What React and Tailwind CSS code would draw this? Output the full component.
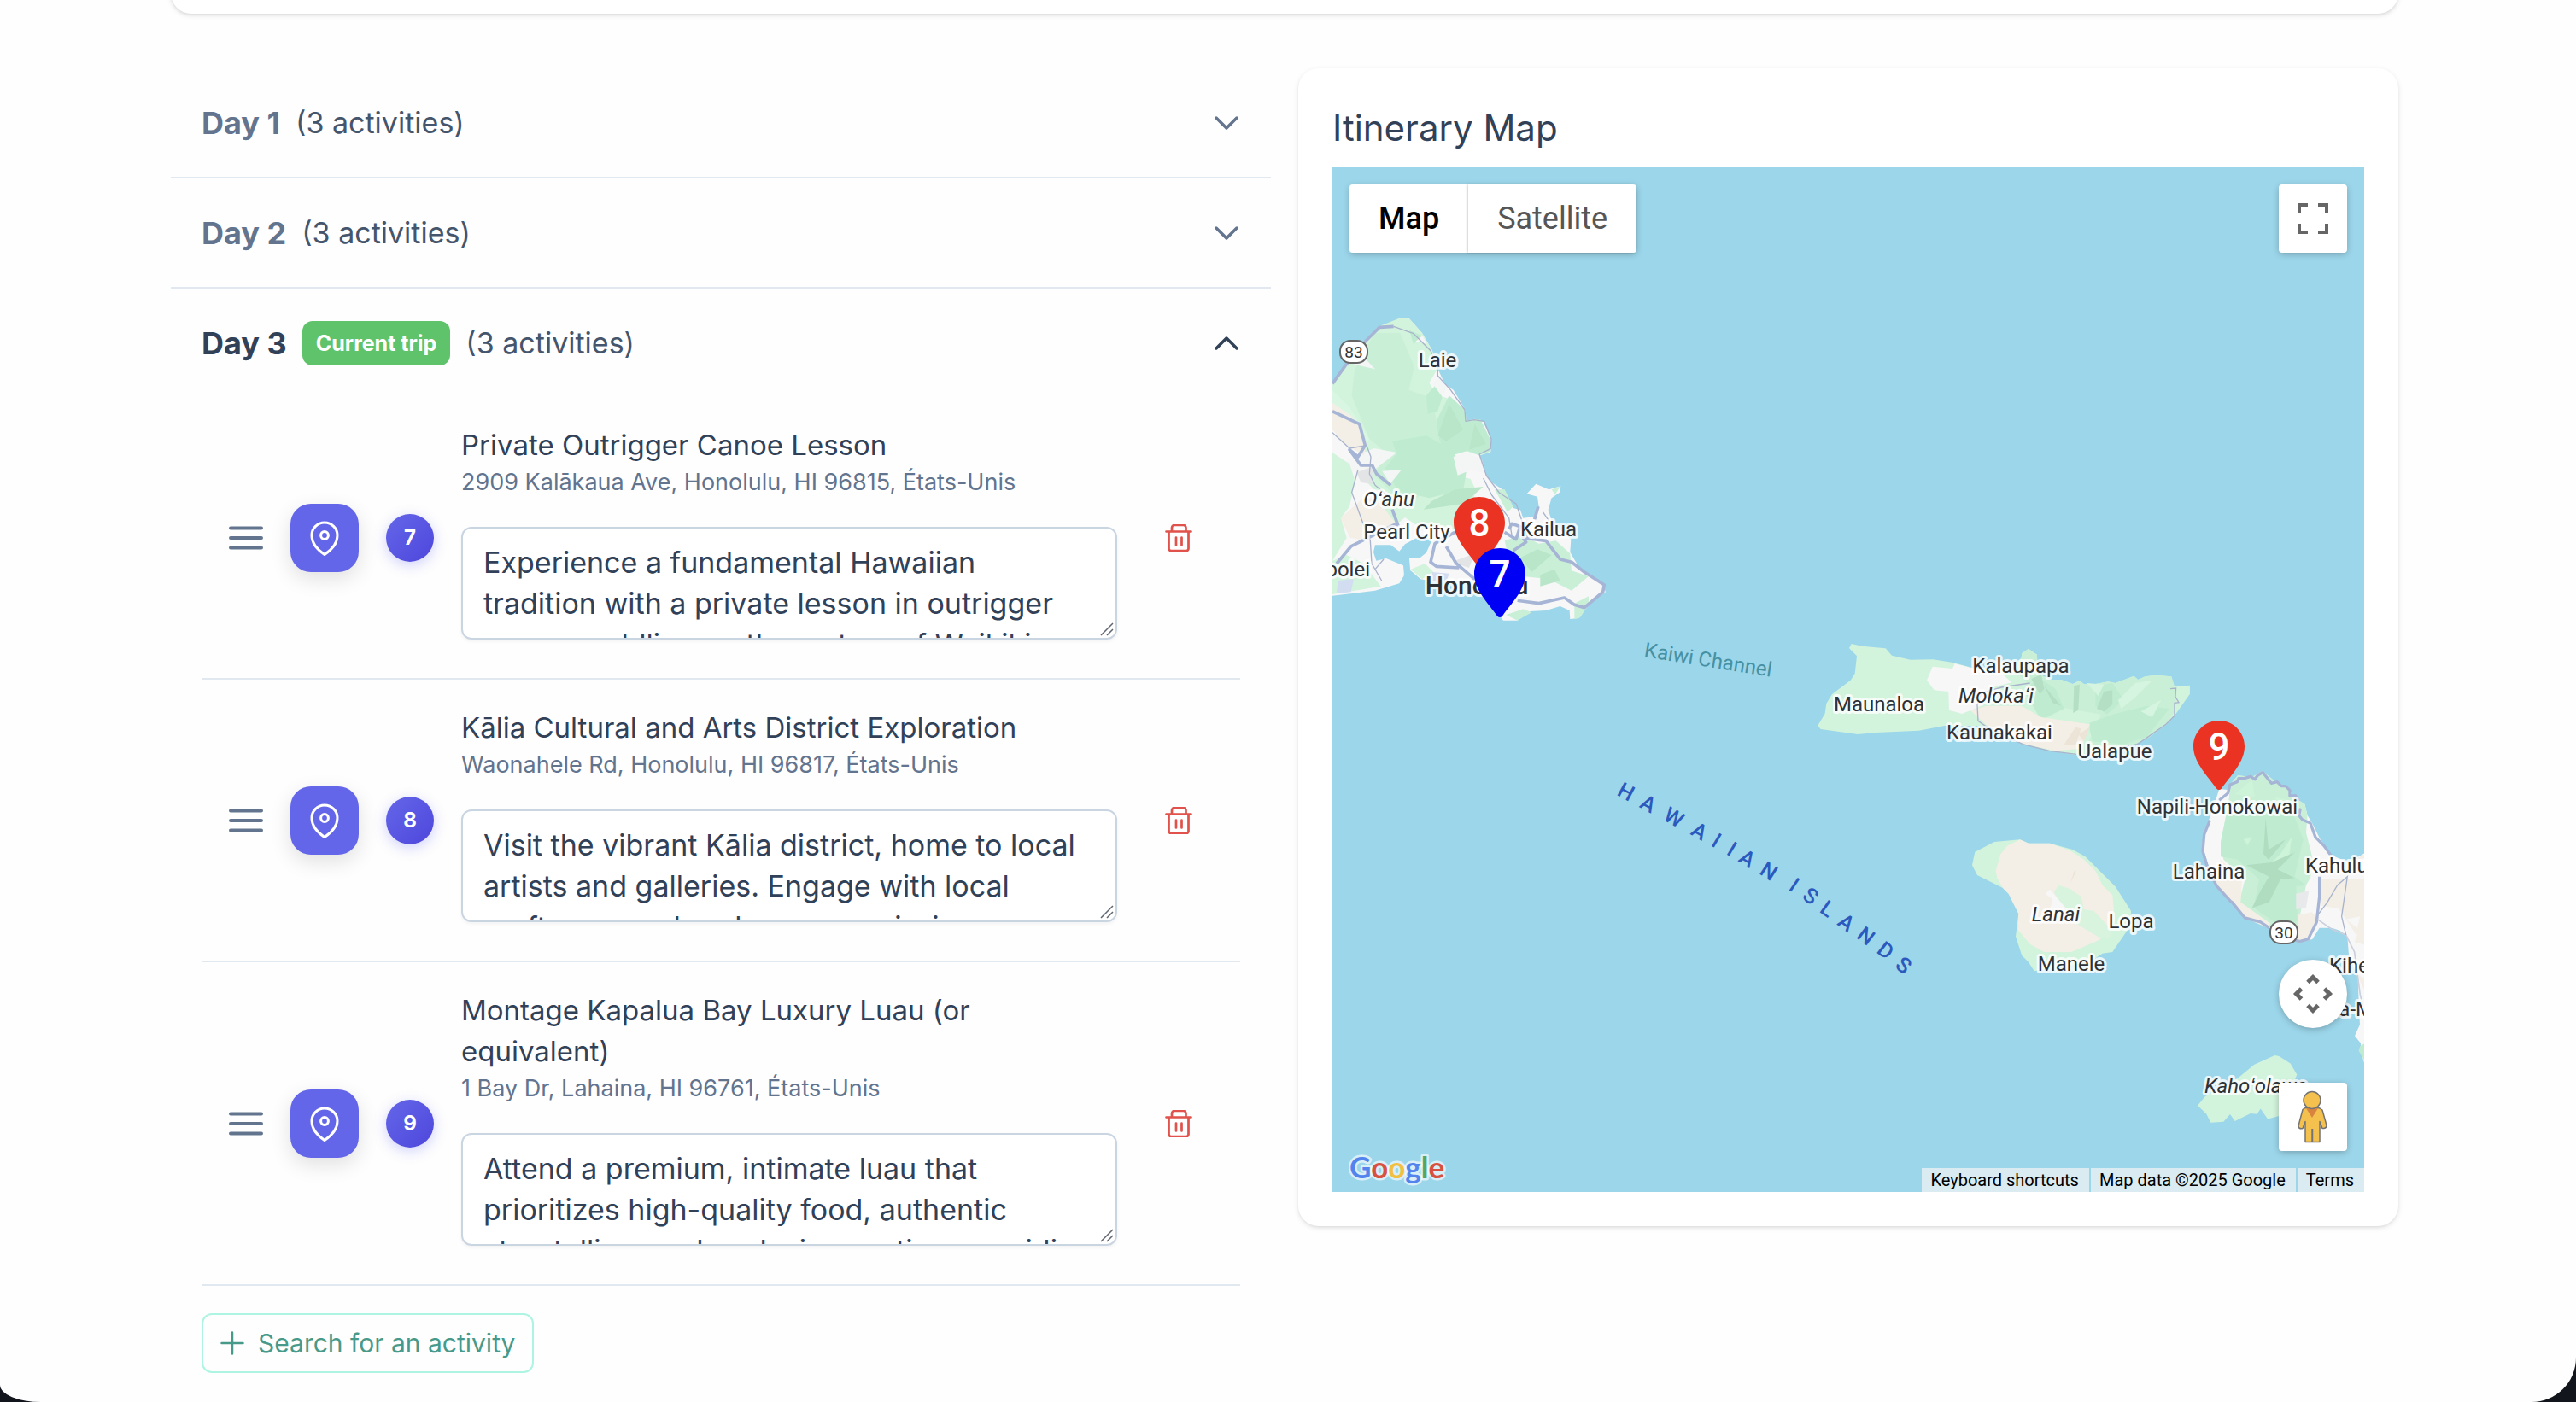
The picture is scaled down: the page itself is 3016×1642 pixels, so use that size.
import React, { useState } from "react";

const days = [
  { id: 1, current: false, activities: [] },
  { id: 2, current: false, activities: [] },
  {
    id: 3,
    current: true,
    activities: [
      {
        number: 7,
        title: "Private Outrigger Canoe Lesson",
        address: "2909 Kalākaua Ave, Honolulu, HI 96815, États-Unis",
        description:
          "Experience a fundamental Hawaiian tradition with a private lesson in outrigger canoe paddling on the waters of Waikiki.",
      },
      {
        number: 8,
        title: "Kālia Cultural and Arts District Exploration",
        address: "Waonahele Rd, Honolulu, HI 96817, États-Unis",
        description:
          "Visit the vibrant Kālia district, home to local artists and galleries. Engage with local craftsmen and perhaps commission a unique piece.",
      },
      {
        number: 9,
        title: "Montage Kapalua Bay Luxury Luau (or equivalent)",
        address: "1 Bay Dr, Lahaina, HI 96761, États-Unis",
        description:
          "Attend a premium, intimate luau that prioritizes high-quality food, authentic storytelling, and exclusive seating, providing a refined evening.",
      },
    ],
  },
];

const labels = [
  { text: "Laie", x: 123, y: 234 },
  { text: "Oʻahu", x: 66, y: 397, italic: true },
  { text: "Pearl City", x: 87, y: 435 },
  { text: "Kailua", x: 253, y: 432 },
  { text: "Kapolei", x: 44, y: 479, anchor: "end" },
  { text: "Kalaupapa", x: 806, y: 592 },
  { text: "Molokaʻi", x: 777, y: 627, italic: true },
  { text: "Maunaloa", x: 640, y: 637 },
  { text: "Kaunakakai", x: 781, y: 670 },
  { text: "Ualapue", x: 916, y: 692 },
  { text: "Lanai", x: 847, y: 883, italic: true },
  { text: "Lopa", x: 935, y: 891 },
  { text: "Manele", x: 865, y: 941 },
  { text: "Napili-Honokowai", x: 1036, y: 757 },
  { text: "Lahaina", x: 1026, y: 833 },
  { text: "Kahului", x: 1139, y: 826, anchor: "start" },
  { text: "Kihei", x: 1167, y: 943, anchor: "start" },
  { text: "Wailea-Makena", x: 1120, y: 994, anchor: "start" },
  { text: "Kahoʻolawe", x: 1021, y: 1084, anchor: "start", italic: true },
];

// letters of the island chain name, laid along its arc
const chain = [
  ["H", 344, 731, 28], ["A", 370, 745, 28], ["W", 400, 761, 29], ["A", 430, 777, 30],
  ["I", 450, 788, 31], ["I", 468, 798, 31], ["A", 486, 809, 32], ["N", 511, 824, 33],
  ["I", 541, 840, 34], ["S", 560, 853, 35], ["L", 580, 868, 35], ["A", 602, 884, 36],
  ["N", 625, 900, 37], ["D", 648, 917, 38], ["S", 669, 934, 38],
];

const Chevron = ({ open }) => (
  <svg className="w-8 h-8" viewBox="0 0 32 32" fill="none" stroke="currentColor" strokeWidth="3.5" strokeLinecap="round" strokeLinejoin="round">
    <path d={open ? "M4 22 16 10l12 12" : "M4 10l12 12 12-12"} />
  </svg>
);

const Activity = ({ activity }) => (
  <li className="flex items-center gap-8 border-b-2 border-slate-200 pt-8 pb-8 px-8">
    <button type="button" aria-label="Reorder activity" className="text-slate-500">
      <svg className="w-10 h-10" viewBox="0 0 40 40" stroke="currentColor" strokeWidth="4" strokeLinecap="round">
        <path d="M2 8.500h36M2 20h36M2 31.500h36" />
      </svg>
    </button>
    <div className="flex size-20 shrink-0 items-center justify-center rounded-3xl bg-[#6466e9] text-white shadow-[0_8px_24px_rgba(0,0,0,0.12)]">
      <svg className="size-12" viewBox="0 0 24 24" fill="none" stroke="currentColor" strokeWidth="1.5" strokeLinejoin="round">
        <circle cx="12" cy="10.5" r="2.2" />
        <path d="M19.5 10.5c0 5-4 8.900-7.500 11.250C8.500 19.400 4.500 15.500 4.500 10.500a7.500 7.500 0 1 1 15 0Z" />
      </svg>
    </div>
    <div className="flex size-14 shrink-0 items-center justify-center rounded-full bg-linear-135 from-[#6466e9] to-[#4f46dc] text-2xl font-bold text-white shadow-[0_4px_16px_rgba(99,102,241,0.3)]">
      {activity.number}
    </div>
    <div className="min-w-0 grow pb-[13px]">
      <h3 className="text-[33px] leading-12 text-slate-700">{activity.title}</h3>
      <p className="text-[27px] leading-10 text-slate-500">{activity.address}</p>
      <div className="relative mt-8">
        <textarea
          aria-label={"Description of " + activity.title}
          defaultValue={activity.description}
          className="block h-33 w-full resize-none overflow-hidden rounded-xl border-2 border-slate-300 bg-white px-6 py-4 text-[34px] leading-12 text-slate-700 shadow-[0_2px_4px_rgba(0,0,0,0.05)]"
        />
        <svg className="pointer-events-none absolute right-1 bottom-1 size-4" viewBox="0 0 16 16" stroke="#5f6670" strokeWidth="1.5">
          <path d="M1 15 15 1M8 15l7-7" />
        </svg>
      </div>
    </div>
    <button type="button" aria-label="Delete activity" className="shrink-0 p-6 text-[#e0524b]">
      <svg className="size-8" viewBox="0 0 32 32" fill="none" stroke="currentColor" strokeWidth="2.7" strokeLinecap="round" strokeLinejoin="round">
        <path d="M1.500 8.500h29M4.500 8.500v20a2.500 2.500 0 0 0 2.500 2.500h18a2.500 2.500 0 0 0 2.500-2.500v-20M8 8.500V4a3 3 0 0 1 3-3h10.500a3 3 0 0 1 3 3v4.500M13 15.500v9M19.500 15.500v9" />
      </svg>
    </button>
  </li>
);

const Day = ({ day, last }) => {
  const [open, setOpen] = useState(day.current);

  return (
    <section className={last ? "" : "border-b-2 border-slate-200"}>
      <button
        type="button"
        aria-expanded={open}
        onClick={() => setOpen(!open)}
        className={"flex h-[127px] w-full items-center justify-between px-9 " + (open ? "text-slate-700" : "text-slate-500")}
      >
        <span className="flex items-center gap-[18px]">
          <span className="text-4xl font-bold">Day {day.id}</span>
          {day.current && (
            <span className="rounded-xl bg-[#5fc36b] px-4 py-1.5 text-[25px] leading-10 font-bold text-white">Current trip</span>
          )}
          <span className="text-[34px] text-slate-600">(3 activities)</span>
        </span>
        <Chevron open={open} />
      </button>
      {open && (
        <div className="px-9">
          <ul>
            {day.activities.map((activity) => (
              <Activity key={activity.number} activity={activity} />
            ))}
          </ul>
          <button
            type="button"
            className="mt-8 flex items-center gap-4 rounded-xl border-2 border-[#adf5e2] px-5 py-[13px] text-3xl leading-10 text-[#479a8a]"
          >
            <svg className="size-7" viewBox="0 0 28 28" stroke="currentColor" strokeWidth="2.500" strokeLinecap="round">
              <path d="M14 1.500v25M1.500 14h25" />
            </svg>
            Search for an activity
          </button>
        </div>
      )}
    </section>
  );
};

const Pin = ({ x, y, color, children }) => (
  <g transform={`translate(${x - 30} ${y - 81})`}>
    <path fill={color} d="M30 0C46.600 0 60 13.400 60 30c0 19-17 35-27 49.500q-3 3-6 0C17 65 0 49 0 30 0 13.400 13.400 0 30 0Z" />
    <text x="30" y="46" fontSize="44" fontWeight="500" fill="#fff" textAnchor="middle">{children}</text>
  </g>
);

const Shield = ({ x, y, children }) => (
  <g>
    <rect x={x - 16} y={y - 13} width="32" height="26" rx="12" fill="#fff" stroke="#666" strokeWidth="2" />
    <text x={x} y={y + 7} fontSize="19" fill="#333" textAnchor="middle">{children}</text>
  </g>
);

const Oahu = () => (
  <g transform="translate(-10 164) scale(.3333)">
    <path fill="#f7f7f8" d="M30 268 75 205l55-75 60-62 40-8 35-22 35 2 45 50 35 60 20 65 25 55 30 20 42 70 3 38 30-6 30 10 28 63-2 43-38 12 22 70 20 25 45 30 30 60 25 7 10 28 40-5 15-35-5-35-37-10 32-35 45 20 42-12-4 22-28 20-12 40 12 40 40 40 28 25-3 45 35 60 75 50 15 30-30 20-55 50-10 22-30 3-2-30-33-15-50 15-55 3-45 32h-50l-30-40-40-40-60-60-60 0H370l-30-5-35-30-20 8-5 12-15 25-85 25-80 10-70 8Z" />
    <path fill="#d2f3dc" d="m30 268 45-63 55-75 60-62 75-30 35 2 45 50 35 60 20 65-30 50 25 40 55 20 45 35 5 40 30-4 25 12 25 55-2 43-38 12-45-15-70 20 15 60 75 20 20 40-30 90-40 50-60-15-60 10-60-40-60 50-60-60 60-80-50-10-60-60 60-60-80-30-20-60-30-30-75-50Z" />
    <path fill="#d8f6e2" d="m30 290 60 60 70 110-20 40-60-20-50-150Z" />
    <path fill="#c9f0d7" d="m108 220 70-130 90 0 50 120-20 80 85 30 15 100 60 60-20 60-50 60-60 70-90-20-60-60 40-80-60-50-60-150Z" />
    <path fill="#bfecd0" d="m240 470 120-20 90 50 50 80-10 60-120 30-110-25-45-80 40-50ZM300 80l45 20-30 30ZM360 310l40-45 25 20-25 80-35 10ZM395 400l45-90 55 50 5 38 50-4 35 70-2 43-38 12-40-15-70 20-30-60Z" />
    <path fill="#b9e6c9" d="m440 340 50 90-60 40-30-20ZM530 410l40 70-60 20ZM380 680l80-40 100-10-70 60-140 20Z" />
    <path fill="#f4f5f5" d="m105 200 45-15 30 32ZM46 555l130-60 80 15-85 65-70 5ZM205 575l68-5-40 50ZM322 120l25-22 15 30ZM382 268l20-22 25 30-10 40ZM455 525l50-15 50 25 15 50-50-15-50 20Z" />
    <path fill="#f4efe6" d="m30 335 65 45 30 30 25 70-10 40-65-40-45-50ZM58 740l75-65 50-5 70 90-100 60-60-10Z" />
    <path fill="#d2f3dc" d="m30 510 60 40 20 60-20 90-30 40 20 70-50 80ZM30 890l50-20 60 30 60 80-170 28ZM305 920l50-20 30 30-40 25Z" />
    <path fill="#c9f0d7" d="m600 640 35 0 30 60-20 20ZM635 820l60-20 60 30 60-10 50 45 5 60 60 20-60 50-80-40-90-10-50-60ZM640 1080l60-20 30 12-50 28ZM880 1040l50-25 0 30-30 45-20 5ZM800 640l32-12-20 30Z" />
    <path fill="#b9e6c9" d="m690 880 60-30 50 20-70 60ZM760 940l50-20 20 40-70 20Z" />
    <path fill="#e3e4e6" d="m115 580 55-20 0 60-40-5ZM460 890l70-25-20 50-30-10Z" />
    <path fill="#d2ddf2" d="m50 960 55-5-10 45-50 5ZM380 930l60 5-10 30-50 0Z" />
    <path fill="#9cd6ea" d="M180 835h55l30 22 20-25 65-35 30 20-20 45-25 20h-35l5 60-22 15-4-50-60-25-35 8-10-30Z" />
    <g fill="none" stroke="#a6b5d5" strokeWidth="11" strokeLinejoin="round">
      <path d="m30 268 45-63 70-85 50-50 50-3M30 365l95 45 20 75-25 40-30-25 40 55 40 0 15 30 50 40M240 710l22 60M45 900l50-60 80-40 80-40M460 790l-70 40-15 65 20 15 80 5M430 840l35 60 70 60M635 790l40 25 15-45-30-10-10 20M665 855l45-30-10-15 80 10 50 65 40 10 45 35 70 45-5 25-65 55-35-10-35-25-90 20-75-10M740 745l13-45" />
    </g>
    <g fill="none" stroke="#a9b3cc" strokeWidth="4" strokeLinejoin="round">
      <path d="m245 67 70 25 60 60 25 60 0 28 45 50 50 70 3 40 30-5 35 5 25 63-2 33-40 20 25 75 45 60 60 40 40 120M30 440l60 55 60-10 15 40-5 60 20 40 60 50M120 570l-22 80 40 110 25 60 5 80 35 60M180 920l30-35M560 600l30 60 60 80 10 60M770 720l20 30" />
    </g>
  </g>
);

const Molokai = () => (
  <g transform="translate(520 524) scale(.3333)">
    <path fill="#d2f3dc" d="m263 102 37 8 83 8 22 25 65 15 80-1 70 11 70 19 70 3 60 15h42v-70l23-15 30 20 2 65 43 23h40l40 15 23-11 17 11h40l45-8 25 5 65-25 15 13 25-11 35-5 57 5 11 36 54-5v30l-47 67-35 40-70 45-60 35-90 25-95 3-95-15-100-26-120-62H590l-90 17-150 7-65 6-130-18-10-13 25-42 5-35 20-33 65-49 15-23 7-62-27-28Z" />
    <path fill="#c9f0d7" d="m862 135 23-15 30 20 2 65 43 23h40l40 15 23-11 17 11h40l45-8 25 5 65-25 15 13 25-11 35-5 57 5 18 60-5 60-30 48-60 45-70 35-90 25-60-30 50-110-170-30-80-70-60-60 30-40Z" />
    <path fill="#bfecd0" d="m870 270 50-50 60 40 30 70-80 40ZM1100 380l80-30 120-30 80 10-80 100-80 25-110-10-10-40ZM1120 250l60-10 40 60-60 50-40-30Z" />
    <path fill="#b4dfc4" d="m895 225 35-15 10 50-15 20ZM1045 250l20-5-5 90-18 10ZM1150 270l30-5 0 50-30 25-25-10ZM940 250l60 70-30-10Z" />
    <path fill="#d6f5e0" d="m1090 240 60 5-20 40ZM1200 300l60-60 60-10-60 60-50 40ZM1280 340l70-40-30 60Z" />
    <path fill="#f7f7f8" d="m548 182 70 7 8-17 70 18 80 3 50 45-80 20-20 60-75 30-45-13-2-65-50-5-26-35Z" />
    <path fill="#f4efe6" d="m680 335 60-15h120l70 40 170 25-30 85-90 8-120-26-120-62Z" />
    <path fill="#ece4d6" d="m1010 455 40-60 20 5-20 60ZM1060 420l40-25-20 50Z" />
    <path fill="none" stroke="#a9b3cc" strokeWidth="4" d="m890 240-100 15-70 20-15 40 3 58 50 35 110 48 90 22 96 12M1383 260l20-2-2 30 12 20-15 2v45l-30 30-100 70-60 12" />
  </g>
);

const Lanai = () => (
  <g transform="translate(520 524) scale(.3333)">
    <path fill="#d2f3dc" d="m765 798 90-8 30 13h75l80 22 45 25 105 105 55 85v50l-65 95-35 5-45 30-195 32-20-32-23-22-22-68 10-80-35-70-20-20-90-45-18-35 10-47Z" />
    <path fill="#f4efe6" d="m855 790 30 13h75l70 25 50 32 40 40 25 50 35 35 8 90-53 67-100 43h-95l-50-28-42-50 2-57-35-70-20-20-20-35-5-25 17-60 23-28Z" />
    <path fill="#d8f4df" d="m990 950 40 12 40 28 10 45 35 5 55 60 5 32-35 6-80-48-60-70-25-45Z" />
    <path fill="#f7f7f8" d="m945 980 15-15 60 70-60 0 10-35Z" />
    <path fill="#ece4d6" d="m1046 898 6 4-20 42Z" />
  </g>
);

const Maui = () => (
  <g transform="translate(890 624) scale(.3333)">
    <path fill="#f7f7f8" d="m445 312 30 3 5-15 30-35 50 5 38-20 42 35 50 25 15 30 40 25 10 40 15 25 30 60 40 55 60 25 60-35v760l-18-63v-27l-21-25 18-40-4-80-3-86-32-79-5-65-38-30h-60l-25 40-40 10-75-20-60-50-55-15-45-55-60-60-30-70-22-70 7-50 25-60Z" />
    <path fill="#c9f0d7" d="m480 340 0-40 30-35 50 5 38-20 42 35 50 25 15 30 40 25 10 40-5 60 25 100-10 60-15 25-30 150-20 30-60-20-125-100 20-80-75-70-10-60 20-100Z" />
    <path fill="#bfecd0" d="m470 400 130-20 110 30 30 80-30 130 40 30-35 5 5 120-50 25-105-70 20-100-75-70-60-10 0-50Z" />
    <path fill="#cdf3d9" d="m500 330 60-50 10 60ZM640 340l80 20-50 40ZM530 490l30-10-15 30ZM660 540l40-60-10 70-60 20Z" />
    <path fill="#b0dcc0" d="m608 415 10 110 60-35-60 70-18-20ZM540 580l90-10 80-35-60 60 60 30-50 5-40 80-60 20 30-60 30-50Z" />
    <path fill="#f4efe6" d="m440 510 10 50 75 70-5 80 105 75-10 15-80-35-45-55-60-60 20-90ZM720 755l50-10 20 20-30 75-40 5ZM800 628h155v200l-30-5-60-90-60-10Z" />
    <path fill="#f7f7f8" d="m800 740 50-10 50 90-60-20-50-30ZM890 770l50-10-10 40Z" />
    <path fill="#f4efe6" d="m940 800 15 0v60l-35-10ZM925 960l30 20v40Z" />
    <path fill="#e8e9eb" d="m715 680 45-10-10 60-35 5Z" />
    <path fill="#f4efe6" d="m920 560 35-18v14Z" />
    <path fill="#bfecd0" d="m940 1215 15-8v60l-20-35Z" />
    <path fill="none" stroke="#a6b5d5" strokeWidth="10" strokeLinejoin="round" d="m445 352 30-25 8-30 25-10 5-12 20 0 22-7 15 10 10-14 18-10 30 38 20-5 15 15 15 0 15 15 0 20 20-2 10 20M730 380l-5 25 12 15 28 12 18 50 30 30 25 35M797 620v70l-10 90-30 60-30 8-60-20M620 800l-30-20-55-15-45-55-5-3-50-55-30-60-18-60 5-60 20-50" />
    <path fill="none" stroke="#c9cfdc" strokeWidth="5" d="m790 770 50 35 50 20 30 60 20 150 15 60" />
    <path fill="none" stroke="#a9b3cc" strokeWidth="4" d="M795 750l30-40 35-60 35-30-20 140 15 65" />
  </g>
);

const Kahoolawe = () => (
  <path fill="#d2f3dc" transform="translate(940 884) scale(.3333 .3584)" d="m490 435 15 3 40 24 23 36-30 70-10 60-63 15-25-33-12 17-23-2-55 25-17-22-23 24-45 3-15-28-31-28 26-29 115-60 58-45Z" />
);

const MapButton = ({ label, className, children }) => (
  <button type="button" aria-label={label} className={"flex size-20 items-center justify-center bg-white shadow-[0_2px_8px_-1px_rgba(0,0,0,0.3)] " + className}>
    {children}
  </button>
);

const ItineraryMap = () => (
  <div className="relative h-[1200px] overflow-hidden bg-[#9cd6ea] font-['Roboto',sans-serif]">
    <svg className="absolute inset-0 h-full w-full" viewBox="0 0 1208 1200" preserveAspectRatio="xMidYMid slice">
      <Oahu />
      <Molokai />
      <Lanai />
      <Maui />
      <Kahoolawe />
      <Shield x={25} y={216}>83</Shield>
      <Shield x={1114} y={896}>30</Shield>
      <g fontSize="24" fill="#2e3236" stroke="#fff" strokeOpacity=".8" strokeWidth="6" strokeLinejoin="round" paintOrder="stroke">
        {labels.map((label) => (
          <text key={label.text} x={label.x} y={label.y} textAnchor={label.anchor || "middle"} fontStyle={label.italic ? "italic" : "normal"}>
            {label.text}
          </text>
        ))}
        <text x="169" y="500" fontSize="30" fontWeight="500" textAnchor="middle">Honolulu</text>
      </g>
      <text x="440" y="585" fontSize="24" fill="#4590a3" textAnchor="middle" transform="rotate(9 440 577)">Kaiwi Channel</text>
      <g fontSize="25" fontWeight="500" fill="#2b59bd" textAnchor="middle">
        {chain.map(([letter, x, y, angle]) => (
          <text key={x} x={x} y={y + 9} transform={`rotate(${angle} ${x} ${y})`}>{letter}</text>
        ))}
      </g>
      <Pin x={172} y={467} color="#ea3323">8</Pin>
      <Pin x={196} y={527} color="#0000f5">7</Pin>
      <Pin x={1038} y={729} color="#ea3323">9</Pin>
    </svg>

    <div className="absolute top-5 left-5 flex h-20 text-4xl shadow-[0_2px_8px_-1px_rgba(0,0,0,0.3)]">
      <button type="button" className="rounded-l-sm bg-white px-[34px] font-medium text-black">Map</button>
      <button type="button" className="rounded-r-sm bg-white px-[34px] text-[#565656] shadow-[-1px_0_3px_rgba(0,0,0,0.2)]">Satellite</button>
    </div>

    <MapButton label="Toggle fullscreen view" className="absolute top-5 right-5 rounded-sm">
      <svg className="size-9" viewBox="0 0 36 36" fill="none" stroke="#666" strokeWidth="4">
        <path d="M2 12V2h10M24 2h10v10M34 24v10H24M12 34H2V24" />
      </svg>
    </MapButton>

    <div className="absolute right-5 bottom-12 flex flex-col gap-16">
      <MapButton label="Map camera controls" className="rounded-full">
        <svg className="size-20" viewBox="0 0 80 80" fill="none" stroke="#666" strokeWidth="5">
          <path d="m34 26.500 6-6 6 6M34 53.500l6 6 6-6M26.500 34l-6 6 6 6M53.500 34l6 6-6 6" />
        </svg>
      </MapButton>
      <MapButton label="Street View" className="rounded-sm">
        <svg className="size-20" viewBox="0 0 80 80" fill="#f4c14e" stroke="#737373" strokeWidth="1.500" strokeLinejoin="round">
          <path d="M30 30q9-3 18 0l3 2 5 18q0 3-3 3.500l-2 0-3-8v24H31v-24l-3 8q-5 1-5-3l5-19Z" />
          <path d="M39.500 54v15M39 54v15" />
          <path fill="#d8843f" stroke="none" d="M32 30h14l-7 11Z" />
          <circle cx="39" cy="20.500" r="10" />
        </svg>
      </MapButton>
    </div>

    <a href="#google" aria-label="Open this area in Google Maps" className="absolute bottom-0 left-5">
      <svg className="h-12 w-30" viewBox="0 0 120 48">
        <text x="0" y="32" fontSize="35" fontWeight="700" fontFamily="Lato, sans-serif" stroke="#fff" strokeOpacity=".65" strokeWidth="5" strokeLinejoin="round" paintOrder="stroke">
          <tspan fill="#5383ec">G</tspan>
          <tspan fill="#d85140">o</tspan>
          <tspan fill="#f1bf42">o</tspan>
          <tspan fill="#5383ec">g</tspan>
          <tspan fill="#58a55c">l</tspan>
          <tspan fill="#d85140">e</tspan>
        </text>
      </svg>
    </a>

    <div className="absolute right-0 bottom-0 flex gap-0.5 text-xl leading-7 text-black">
      <button type="button" className="bg-[#f5f5f5]/70 pr-3 pl-2.5">Keyboard shortcuts</button>
      <span className="bg-[#f5f5f5]/70 pr-3 pl-2.5">Map data ©2025 Google</span>
      <a href="#terms" className="bg-[#f5f5f5]/70 pr-3 pl-2.5">Terms</a>
    </div>
  </div>
);

const App = () => {
  return (
    <div className="min-h-screen bg-[#12161c] font-['Inter',sans-serif]">
      <main className="min-h-screen overflow-hidden rounded-br-[52px] rounded-bl-[48px_20px] bg-[#fefefe] pr-52 pb-8 pl-50">
        <div className="-mt-2 h-6 rounded-b-3xl bg-white shadow-[0_2px_6px_rgba(0,0,0,0.1),0_2px_4px_-2px_rgba(0,0,0,0.1)]" />
        <div className="mt-16 grid grid-cols-2 items-start gap-8">
          <div>
            {days.map((day, index) => (
              <Day key={day.id} day={day} last={index === days.length - 1} />
            ))}
          </div>
          <section className="rounded-3xl bg-white p-10 shadow-[0_2px_6px_rgba(0,0,0,0.1),0_2px_4px_-2px_rgba(0,0,0,0.1)]">
            <h2 className="mb-4 text-[42px] leading-[60px] text-slate-700">Itinerary Map</h2>
            <ItineraryMap />
          </section>
        </div>
      </main>
    </div>
  );
};

export default App;
